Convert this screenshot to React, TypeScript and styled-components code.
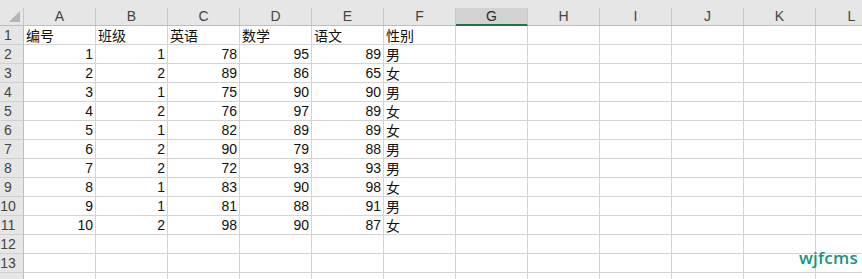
import styled, { createGlobalStyle } from "styled-components";

const GlobalStyle = createGlobalStyle`
    html, body {
        margin: 0;
        padding: 0;
        background: #fff;
        overflow: hidden;
    }
    body {
        font-family: "Noto Sans CJK SC", "Noto Sans", sans-serif;
    }
`

const COLS = ["A", "B", "C", "D", "E", "F", "G", "H", "I", "J", "K", "L"];
const SELECTED_COL = "G";
// row 14 only peeks in at the bottom edge, its number is below the fold
const VISIBLE_LABELS = 13;

type Value = string | number;

const data: Value[][] = [
    ["编号", "班级", "英语", "数学", "语文", "性别"],
    [1, 1, 78, 95, 89, "男"],
    [2, 2, 89, 86, 65, "女"],
    [3, 1, 75, 90, 90, "男"],
    [4, 2, 76, 97, 89, "女"],
    [5, 1, 82, 89, 89, "女"],
    [6, 2, 90, 79, 88, "男"],
    [7, 2, 72, 93, 93, "男"],
    [8, 1, 83, 90, 98, "女"],
    [9, 1, 81, 88, 91, "男"],
    [10, 2, 98, 90, 87, "女"],
    [],
    [],
    [],
];

const Frame = styled.div`
    position: relative;
    width: 862px;
    height: 279px;
    overflow: hidden;
    background: #fff;
`
const TopStrip = styled.div`
    height: 8px;
    background: #e6e6e6;
`
const Sheet = styled.div`
    display: grid;
    grid-template-columns: 24px repeat(12, 72px);
    grid-auto-rows: 19px;
    grid-template-rows: 18px;
    width: max-content;
`
const Corner = styled.div`
    position: relative;
    box-sizing: border-box;
    background: #e6e6e6;
    border-right: 1px solid #c8c8c8;
    border-bottom: 1px solid #bdbdbd;
    &::after {
        content: "";
        position: absolute;
        right: 3px;
        bottom: 3px;
        width: 0;
        height: 0;
        border-left: 11px solid transparent;
        border-bottom: 11px solid #b4b4b4;
    }
`
const ColHeader = styled.div<{ $selected?: boolean }>`
    box-sizing: border-box;
    background: ${p => p.$selected ? "#d2d2d2" : "#e6e6e6"};
    border-right: 1px solid #c8c8c8;
    border-bottom: ${p => p.$selected ? "2px solid #217346" : "1px solid #bdbdbd"};
    color: ${p => p.$selected ? "#2a2a2a" : "#444"};
    font-family: "Liberation Sans", "Noto Sans", sans-serif;
    font-size: 14px;
    line-height: 17px;
    text-align: center;
`
const RowHeader = styled.div`
    box-sizing: border-box;
    background: #e6e6e6;
    border-right: 1px solid #bdbdbd;
    border-bottom: 1px solid #d0d0d0;
    color: #444;
    font-family: "Liberation Sans", "Noto Sans", sans-serif;
    font-size: 14px;
    line-height: 18px;
    text-align: center;
    padding-right: 7px;
`
const Cell = styled.div<{ $numeric?: boolean }>`
    box-sizing: border-box;
    border-right: 1px solid #d4d4d4;
    border-bottom: 1px solid #d4d4d4;
    color: #111;
    font-family: ${p => p.$numeric ? `"Liberation Sans", "Noto Sans", sans-serif` : `"Noto Sans CJK SC", sans-serif`};
    font-size: 14px;
    line-height: 18px;
    text-align: ${p => p.$numeric ? "right" : "left"};
    padding: 0 2px;
    white-space: nowrap;
    overflow: hidden;
`
const Watermark = styled.div`
    position: absolute;
    left: 799px;
    top: 246px;
    color: #16957f;
    font-family: "Open Sans", "Noto Sans", sans-serif;
    font-size: 17px;
    font-weight: 600;
    letter-spacing: 0.2px;
`

export default function App() {
    const rows = [...data, []];
    return (
        <>
            <GlobalStyle />
            <Frame>
                <TopStrip />
                <Sheet>
                    <Corner />
                    {COLS.map(c => (
                        <ColHeader key={c} $selected={c === SELECTED_COL}>{c}</ColHeader>
                    ))}
                    {rows.map((row, r) => [
                        <RowHeader key={`h${r}`}>{r < VISIBLE_LABELS ? r + 1 : ""}</RowHeader>,
                        ...COLS.map((c, i) => {
                            const v = row[i];
                            return (
                                <Cell key={`${r}-${c}`} $numeric={typeof v === "number"}>
                                    {v ?? ""}
                                </Cell>
                            );
                        }),
                    ])}
                </Sheet>
                <Watermark>wjfcms</Watermark>
            </Frame>
        </>
    );
}
